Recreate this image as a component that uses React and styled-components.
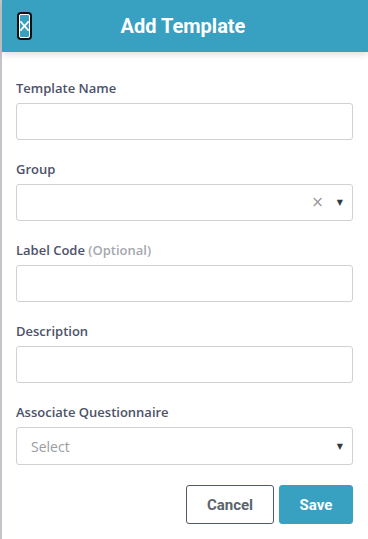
import React from 'react';
import styled, {createGlobalStyle} from "styled-components";

const Global = createGlobalStyle`
  html, body {
    margin: 0;
    padding: 0;
    background: #fff;
  }
  * {
    box-sizing: border-box;
  }
`

function App() {
    return (
        <Panel>
            <Global/>
            <Header>
                <CloseBtn aria-label="close">
                    <svg width="12" height="14" viewBox="0 0 12 14">
                        <path d="M1.5 2 L10.5 12 M10.5 2 L1.5 12" stroke="#fff" strokeWidth="1.8" fill="none"/>
                    </svg>
                </CloseBtn>
                <Title>Add Template</Title>
            </Header>
            <Form>
                <Field>
                    <Label>Template Name</Label>
                    <Input/>
                </Field>
                <Field>
                    <Label>Group</Label>
                    <SelectBox>
                        <Placeholder/>
                        <Clear>×</Clear>
                        <Caret>▼</Caret>
                    </SelectBox>
                </Field>
                <Field>
                    <Label>Label Code <Optional>(Optional)</Optional></Label>
                    <Input/>
                </Field>
                <Field>
                    <Label>Description</Label>
                    <Input/>
                </Field>
                <Field>
                    <Label>Associate Questionnaire</Label>
                    <SelectBox tall>
                        <Placeholder>Select</Placeholder>
                        <Caret>▼</Caret>
                    </SelectBox>
                </Field>
                <Actions>
                    <Button width={88}>Cancel</Button>
                    <Button primary width={74}>Save</Button>
                </Actions>
            </Form>
        </Panel>
    );
}

export default App;

const Panel = styled.div`
  width: 368px;
  height: 539px;
  border-left: 2px solid #c4c4cb;
  background: #fff;
  display: flex;
  flex-direction: column;
`

const Header = styled.div`
  height: 52px;
  background: #38a0c0;
  display: flex;
  align-items: center;
  padding-left: 15px;
  box-shadow: 0 3px 6px rgba(0, 0, 0, 0.12);
  position: relative;
`

const CloseBtn = styled.button`
  width: 15px;
  height: 28px;
  padding: 0;
  margin: 0;
  background: transparent;
  border: 2px solid #111;
  border-radius: 4px;
  outline: 1px solid #fff;
  outline-offset: -3px;
  display: flex;
  align-items: center;
  justify-content: center;
`

const Title = styled.h1`
  flex: 1;
  margin: 0 0 0 -15px;
  padding-right: 19px;
  text-align: center;
  color: #fff;
  font-family: Roboto, "Liberation Sans", sans-serif;
  font-weight: 700;
  font-size: 20px;
`

const Form = styled.div`
  display: flex;
  flex-direction: column;
  padding: 27px 15px 0 14px;
  gap: 20px;
`

const Field = styled.div`
  display: flex;
  flex-direction: column;
  gap: 6px;
`

const Label = styled.label`
  font-family: "Open Sans", "Liberation Sans", sans-serif;
  font-size: 13px;
  font-weight: 600;
  color: #4b5269;
  line-height: 18px;
`

const Optional = styled.span`
  color: #a5a8ae;
`

const Input = styled.input`
  width: 100%;
  height: 37px;
  border: 1px solid #cfd1d4;
  border-radius: 3px;
  outline: none;
  padding: 0 12px;
  font-family: "Open Sans", sans-serif;
  font-size: 14px;
`

const SelectBox = styled.div`
  height: ${p => p.tall ? '38px' : '37px'};
  border: 1px solid #cfd1d4;
  border-radius: 3px;
  display: flex;
  align-items: center;
  padding: 0 9px 0 14px;
`

const Placeholder = styled.span`
  flex: 1;
  font-family: "Open Sans", sans-serif;
  font-size: 14px;
  color: #9a9ca0;
`

const Clear = styled.span`
  font-family: "DejaVu Sans", sans-serif;
  font-size: 15px;
  color: #9a9a9a;
  margin-right: 13px;
  line-height: 1;
`

const Caret = styled.span`
  font-family: "DejaVu Sans", sans-serif;
  font-size: 8px;
  color: #333b44;
`

const Actions = styled.div`
  display: flex;
  justify-content: flex-end;
  gap: 5px;
`

const Button = styled.button`
  width: ${p => p.width}px;
  height: 39px;
  padding: 0;
  border-radius: 3px;
  border: 1px solid ${p => p.primary ? '#38a0c0' : '#4f5b66'};
  background: ${p => p.primary ? '#38a0c0' : '#fff'};
  color: ${p => p.primary ? '#fff' : '#5a646e'};
  font-family: Roboto, "Liberation Sans", sans-serif;
  font-weight: 700;
  font-size: 15px;
`
